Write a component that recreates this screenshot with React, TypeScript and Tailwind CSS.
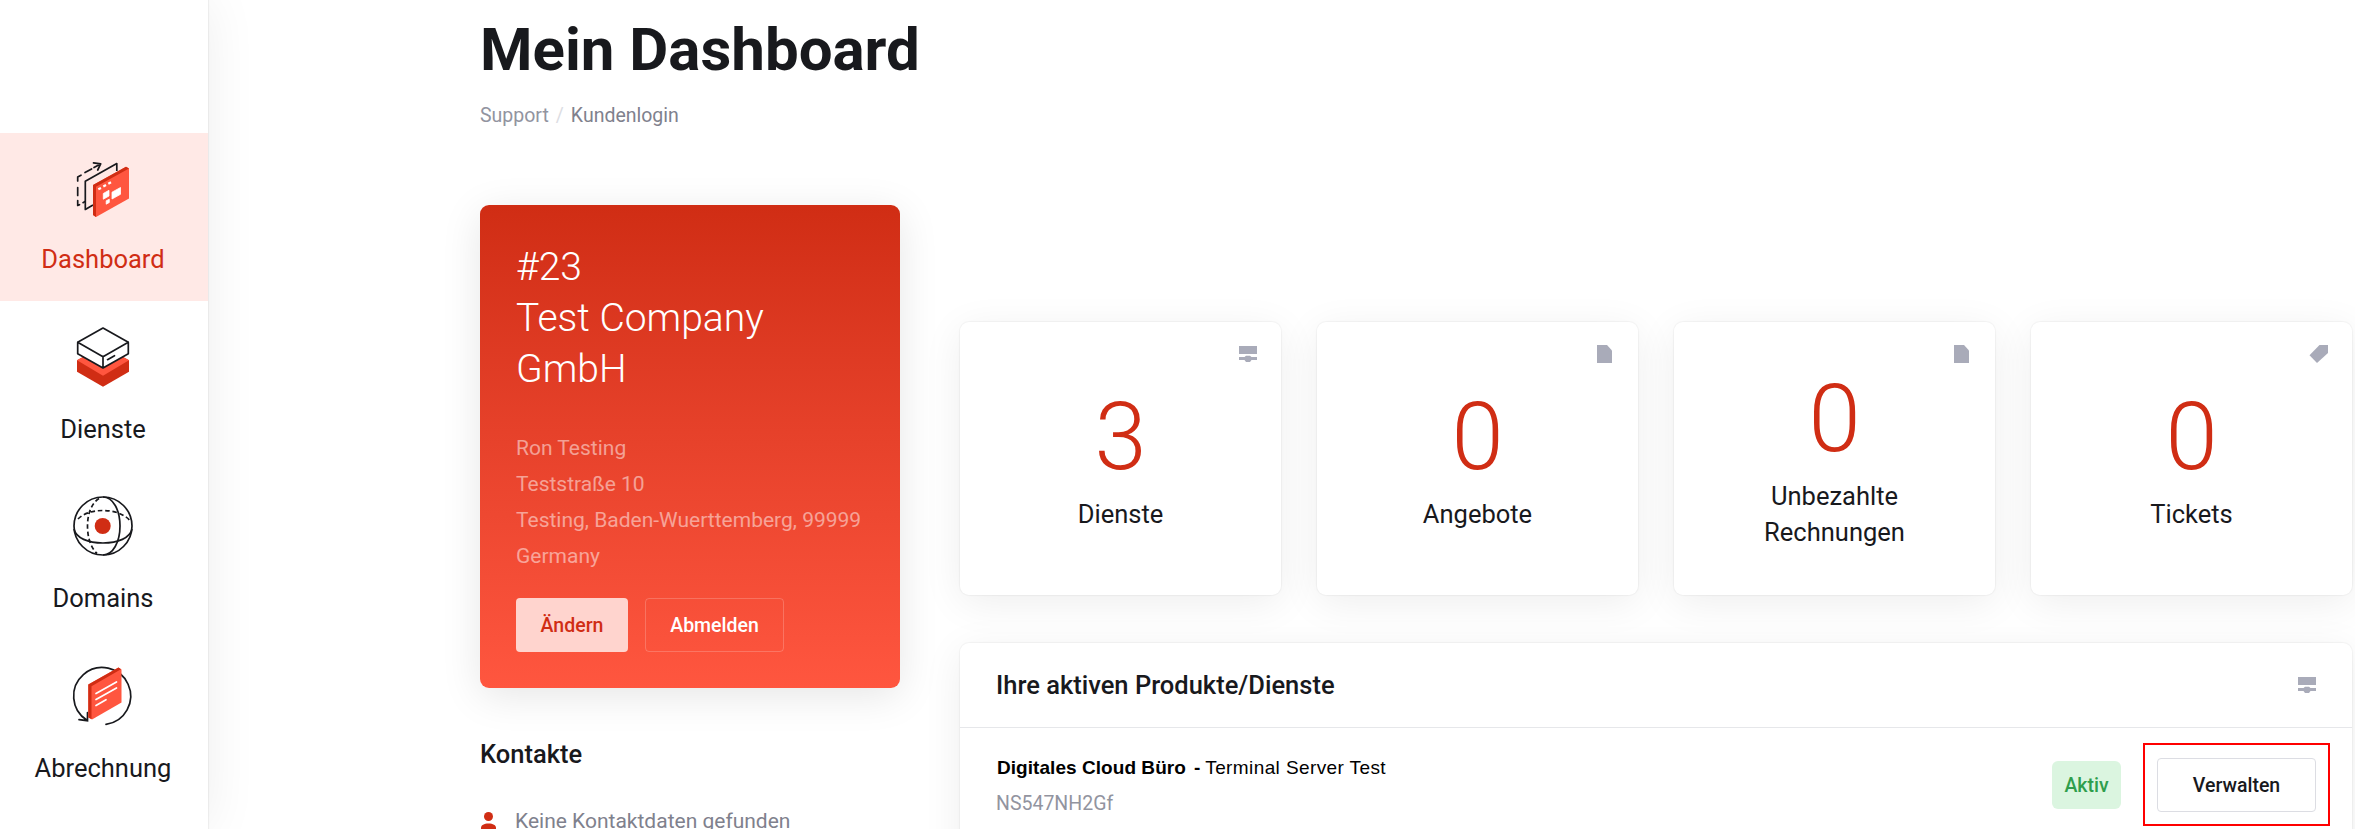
import React from 'react';

const DashboardIcon = () => (
  <svg className="overflow-visible" width="60" height="60" viewBox="0 0 60 60" fill="none" stroke="#18191d" strokeWidth="1.700" strokeLinejoin="round">
    <path d="M4.700 22 V18 L8 16.200 M12 13.600 L18.600 10 M4.700 28.500 V36.500 M4.700 41.500 V46.500 L6.500 45.700 M10 43.700 L12 42.600" strokeLinecap="round" />
    <path d="M20.500 3.800 L27.700 4.900 L24.700 11 M21 8.500 L27.500 5" strokeLinecap="round" />
    <path d="M43.800 12 V4.500 L12.300 22.300 V50.500 L20 46" />
    <path d="M20 26 L53 7.800 L56 9.500 V39.500 L23 58 L20 56 Z" fill="#ff563f" stroke="none" />
    <path d="M20 26 L53 7.800 L56 9.500 L23 27.700 V58 L20 56 Z" fill="#d02d14" stroke="none" />
    <path d="M25.300 30.300 L28 28.900 M30.300 27.500 L33 26 M35.300 24.700 L38 23.200" stroke="#fff" strokeWidth="2.200" />
    <path d="M30.300 34.500 L36 31.300 V37 L30.300 40.200 Z M39 33.200 L47.500 28.500 V35.300 L39 40 Z M33.200 41.800 L36.300 40.200 V43.500 L33.200 45.200 Z" fill="#fff" stroke="#fff" strokeWidth="0.800" />
  </svg>
);

const ServicesIcon = () => (
  <svg className="overflow-visible" width="60" height="60" viewBox="0 -0.700 60 60" fill="none">
    <path d="M4 30.500 L30 16 L56 30.500 V42 L30 57 L4 42 Z" fill="#d02d14" />
    <path d="M4 30.500 L30 16 L56 30.500 L30 46 Z" fill="#ff563f" />
    <path d="M4.700 12.500 L30 -1.700 L55.300 12.500 V24 L30 38.300 L4.700 24 Z" fill="#fff" />
    <path d="M4.700 12.500 L30 -1.700 L55.300 12.500 V24 L30 38.300 L4.700 24 Z M4.700 12.500 L30 27 L55.300 12.500 M30 27 V38.300 M34.500 30 L41.500 26" stroke="#18191d" strokeWidth="1.700" strokeLinejoin="round" strokeLinecap="round" />
  </svg>
);

const DomainsIcon = () => (
  <svg className="overflow-visible" width="60" height="60" viewBox="0 2 60 60" fill="none" stroke="#18191d" strokeWidth="1.700">
    <circle cx="30" cy="30" r="29" />
    <path d="M1 33 C3 42 15 47 30 47 C45 47 57 42 59 33" />
    <path d="M30 1 C40 1 47 14 47 30 C47 46 40 59 30 59" />
    <path d="M26 2.500 C18.500 7 14.500 18 14.500 30 C14.500 42 18 52 24 57.500 M5 23 C11 17 20 14.500 30 14.500 C41 14.500 51 18 57 24.500" strokeDasharray="4.500 2.800" />
    <circle cx="29.700" cy="30" r="8" fill="#d02d14" stroke="none" />
  </svg>
);

const BillingIcon = () => (
  <svg className="overflow-visible" width="60" height="60" viewBox="0 2 60 60" fill="none" strokeLinecap="round">
    <path d="M33 58.300 A28.500 28.500 0 1 0 14 54.200 M6 53.700 L14.500 54.700 L14.500 46.500" stroke="#18191d" strokeWidth="1.700" />
    <path d="M15.300 18.500 L45.500 1.500 L48.500 3.500 V36.500 L19 53.500 L15.300 51.500 Z" fill="#ff563f" />
    <path d="M15.300 18.500 L45.500 1.500 L48 3.300 L18.500 20.300 V53 L15.300 51.500 Z" fill="#d02d14" />
    <path d="M23 27.500 L43.500 16 M23 33.500 L43.500 22 M23 39.500 L33 33.700" stroke="#fff" strokeWidth="1.700" />
  </svg>
);

const ServerIcon = () => (
  <svg width="18" height="18" viewBox="0 0 18 18" fill="#a9abb9">
    <path d="M0 1h18v8H0zM0 12h5.500l1.500-1.300h4L12.500 12H18v3h-5.500L11 17H7l-1.500-2H0z" />
  </svg>
);

const FileIcon = () => (
  <svg width="18" height="18" viewBox="0 0 18 18" fill="#a9abb9">
    <path d="M1 0h10l5 5.500V18H1z" />
  </svg>
);

const TagIcon = () => (
  <svg className="overflow-visible" width="18" height="18" viewBox="0 0 18 18" fill="#a9abb9">
    <path d="M9.500 0H18v8L7 18l-7.500-7.700z" />
  </svg>
);

const UserIcon = () => (
  <svg className="shrink-0" width="15" height="18" viewBox="0 0 15 18" fill="#d02d14">
    <circle cx="7.500" cy="4.500" r="4.500" />
    <path d="M0 18v-2c0-3 3-4.500 7.500-4.500S15 13 15 16v2z" />
  </svg>
);

const navItems = [
  { label: 'Dashboard', icon: <DashboardIcon />, active: true },
  { label: 'Dienste', icon: <ServicesIcon /> },
  { label: 'Domains', icon: <DomainsIcon /> },
  { label: 'Abrechnung', icon: <BillingIcon /> },
];

const stats = [
  { value: 3, label: 'Dienste', icon: <ServerIcon /> },
  { value: 0, label: 'Angebote', icon: <FileIcon /> },
  { value: 0, label: 'Unbezahlte Rechnungen', icon: <FileIcon /> },
  { value: 0, label: 'Tickets', icon: <TagIcon /> },
];

interface NavItemProps {
  label: string;
  icon: React.ReactNode;
  active?: boolean;
}

const NavItem: React.FC<NavItemProps> = ({ label, icon, active = false }) => (
  <a
    className={`
      flex h-[168px] flex-col items-center pt-[26px] pr-0.5 text-[25.5px] leading-9
      ${active ? 'bg-[#ffe9e6] text-[#d02d14]' : 'text-[#18191d]'}
    `}
  >
    {icon}
    <span className="mt-[22px]">{label}</span>
  </a>
);

interface StatCardProps {
  value: number;
  label: string;
  icon: React.ReactNode;
}

const StatCard: React.FC<StatCardProps> = ({ value, label, icon }) => (
  <div className="relative flex flex-col items-center justify-center rounded-[9px] bg-white pt-[3px] shadow-[0_0_1px_1px_rgba(0,0,0,0.04),0_8px_40px_rgba(0,0,0,0.07)]">
    <div className="absolute top-[23px] right-6">{icon}</div>
    <div className="text-[94px] leading-[96px] font-light text-[#d02d14]">{value}</div>
    <div className="mt-[11px] w-[180px] text-center text-[25.5px] leading-9 text-[#18191d]">{label}</div>
  </div>
);

export default function App() {
  return (
    <div className="flex h-[829px] w-[2355px] overflow-hidden bg-white font-['Roboto',sans-serif] text-[#18191d]">
      {/* Sidebar */}
      <nav className="flex w-[208px] shrink-0 flex-col gap-[1.6px] pt-[133px] shadow-[0_0_1px_1px_rgba(0,0,0,0.05),0_0_50px_rgba(0,0,0,0.07)]">
        {navItems.map((item) => (
          <NavItem key={item.label} {...item} />
        ))}
      </nav>

      <main className="flex-1 pt-[15px] pl-[272px]">
        <h1 className="text-[60px] leading-[70px] font-bold">Mein Dashboard</h1>
        <div className="mt-4 flex gap-[7px] text-[19.5px] leading-[30px] text-[#7f818d]">
          <span className="text-[#92949f]">Support</span>
          <span className="text-[#dcdde3]">/</span>
          <span>Kundenlogin</span>
        </div>

        <div className="mt-[74px] flex items-start gap-[60px]">
          {/* Account */}
          <aside className="w-[420px] shrink-0">
            <div className="h-[483px] rounded-[9px] bg-linear-to-b from-[#d02d14] to-[#ff563f] px-9 pt-[37px] shadow-[0_8px_40px_rgba(0,0,0,0.1)]">
              <h2 className="w-[300px] text-[39px] leading-[51px] font-light text-white">
                #23
                <br />
                Test Company GmbH
              </h2>
              <div className="mt-[35px] text-[21px] leading-9 whitespace-nowrap text-white/50">
                <p>Ron Testing</p>
                <p>Teststraße 10</p>
                <p>Testing, Baden-Wuerttemberg, 99999</p>
                <p>Germany</p>
              </div>
              <div className="mt-6 flex gap-[17px] text-[19.5px] font-medium">
                <button className="h-[54px] w-[112px] rounded-sm bg-[#ffd4ce] pt-0.5 text-[#d02d14]">Ändern</button>
                <button className="h-[54px] w-[139px] rounded-sm border border-white/20 pt-0.5 text-white">Abmelden</button>
              </div>
            </div>

            <h3 className="mt-[48px] text-[25.5px] leading-9 font-medium">Kontakte</h3>
            <div className="mt-[33px] flex items-center gap-[19px] pl-px text-[21px] leading-8 text-[#7f818d]">
              <UserIcon />
              <span>Keine Kontaktdaten gefunden</span>
            </div>
          </aside>

          {/* Stats and services */}
          <section className="mt-[117px] w-[1392px] shrink-0">
            <div className="grid h-[273px] grid-cols-4 gap-9">
              {stats.map((stat) => (
                <StatCard key={stat.label} {...stat} />
              ))}
            </div>

            <div className="mt-12 h-[240px] rounded-[9px] bg-white shadow-[0_0_1px_1px_rgba(0,0,0,0.04),0_8px_40px_rgba(0,0,0,0.07)]">
              <header className="flex h-[85px] items-center justify-between border-b border-[#e6e7ea] px-9">
                <h3 className="text-[25.5px] font-medium">Ihre aktiven Produkte/Dienste</h3>
                <ServerIcon />
              </header>
              <div className="flex items-start pt-[15px] pr-[22px] pl-9">
                <div className="flex-1">
                  <p className="flex gap-2 pt-[7px] pl-px font-['Liberation_Sans',Arial,sans-serif] text-[19px] leading-9 text-black">
                    <span className="font-bold tracking-[0.05px]">Digitales Cloud Büro</span>
                    <span className="-mr-px font-bold">-</span>
                    <span className="-ml-0.5 tracking-[0.4px]">Terminal Server Test</span>
                  </p>
                  <p className="text-[19.5px] leading-9 text-[#92949f]">NS547NH2Gf</p>
                </div>
                <span className="mt-[18px] mr-[22px] flex h-12 w-[69px] items-center justify-center rounded-md bg-[#dbf5e0] pt-0.5 text-[19.5px] font-medium text-[#2f9e4c]">
                  Aktiv
                </span>
                <div className="h-[83px] w-[187px] border-2 border-[#ff0000] px-3 pt-[13px]">
                  <button className="h-[54px] w-[159px] rounded-sm border border-[#dcdde3] pt-0.5 text-[19.5px] font-medium">
                    Verwalten
                  </button>
                </div>
              </div>
            </div>
          </section>
        </div>
      </main>
    </div>
  );
}
